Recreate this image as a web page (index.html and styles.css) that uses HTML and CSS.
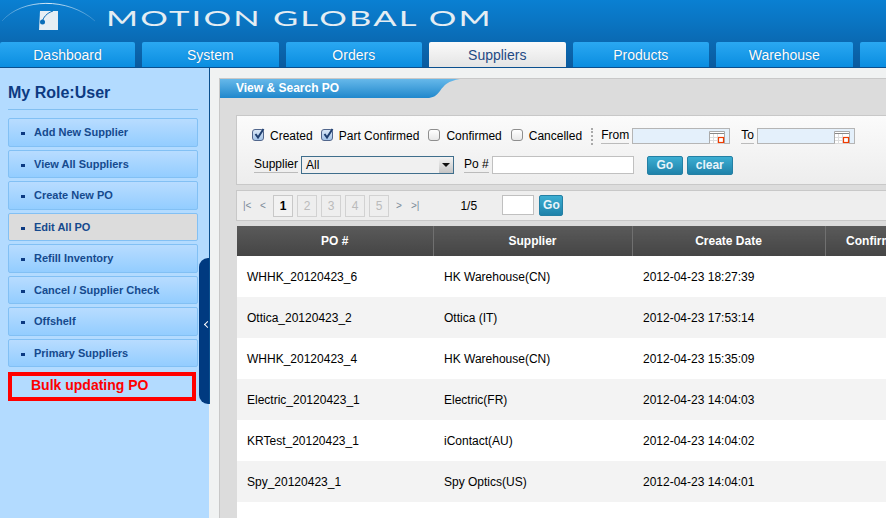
FILE: index.html
```html
<!DOCTYPE html>
<html>
<head>
    <meta charset="utf-8">
    <title>Motion Global OM</title>
    <link rel="stylesheet" href="styles.css">
</head>
<body>
    <div class="page">
        <div class="header">
            <div class="brand">
                <svg class="logo" width="100" height="38" viewBox="0 0 100 38">
                    <defs>
                        <linearGradient id="arcfill" x1="0" y1="0" x2="1" y2="0">
                            <stop offset="0" stop-color="#ffffff" stop-opacity="0.15"/>
                            <stop offset="0.5" stop-color="#ffffff" stop-opacity="0.85"/>
                            <stop offset="1" stop-color="#ffffff" stop-opacity="0.15"/>
                        </linearGradient>
                    </defs>
                    <path d="M2 21 C22 -2 68 -3 95 21" fill="none" stroke="url(#arcfill)" stroke-width="1"/>
                    <path d="M40 11 L58 11 L58 30 L39 30 Z" fill="#e6eef4"/>
                    <path d="M42 23 C43 17 47 13 53 11" fill="none" stroke="#0a6db8" stroke-width="1"/>
                    <circle cx="42.500" cy="22" r="2.500" fill="#0a6db8"/>
                </svg>
                <span class="brand-name">MOTION GLOBAL OM</span>
            </div>
            <ul class="tabs">
                <li>Dashboard</li>
                <li>System</li>
                <li>Orders</li>
                <li class="on">Suppliers</li>
                <li>Products</li>
                <li>Warehouse</li>
                <li></li>
            </ul>
        </div>
        <div class="body">
            <div class="side">
                <h2 class="role">My Role:User</h2>
                <ul class="menu">
                    <li class="t1">Add New Supplier</li>
                    <li class="t2">View All Suppliers</li>
                    <li class="t1">Create New PO</li>
                    <li class="t3 on">Edit All PO</li>
                    <li class="t1">Refill Inventory</li>
                    <li class="t2">Cancel / Supplier Check</li>
                    <li class="t1">Offshelf</li>
                    <li class="t2">Primary Suppliers</li>
                </ul>
                <div class="bulk">Bulk updating PO</div>
                <div class="handle"><span class="chevron"></span></div>
            </div>
            <div class="main">
                <div class="panel">
                    <div class="panel-head">
                        <svg class="panel-tab" width="240" height="20" viewBox="0 0 240 20" preserveAspectRatio="none">
                            <defs>
                                <linearGradient id="tabfill" x1="0" y1="0" x2="0" y2="1">
                                    <stop offset="0" stop-color="#66b8ea"/>
                                    <stop offset="1" stop-color="#2088cc"/>
                                </linearGradient>
                            </defs>
                            <path d="M0 0 H240 C228 2 224 6 220 12 C216 17 213 19 207 19 H0 Z" fill="url(#tabfill)"/>
                        </svg>
                        <span class="panel-title">View &amp; Search PO</span>
                    </div>
                    <div class="filter">
                        <div class="filter-row">
                            <span class="check on"><svg width="12" height="12" viewBox="0 0 12 12"><path d="M2.500 6 L5 9.500 L10.500 1" fill="none" stroke="#1f3f70" stroke-width="2"/></svg></span>
                            <span class="opt opt1">Created</span>
                            <span class="check on"><svg width="12" height="12" viewBox="0 0 12 12"><path d="M2.500 6 L5 9.500 L10.500 1" fill="none" stroke="#1f3f70" stroke-width="2"/></svg></span>
                            <span class="opt opt2">Part Confirmed</span>
                            <span class="check"></span>
                            <span class="opt opt3">Confirmed</span>
                            <span class="check"></span>
                            <span class="opt opt4">Cancelled</span>
                            <span class="dots"></span>
                            <span class="lbl">From</span>
                            <span class="date">
                                <svg class="cal" width="16" height="13" viewBox="0 0 16 13">
                                    <path d="M0.500 12.500 V0.500 H15.500 V12.500" fill="#fff" stroke="#aaa"/>
                                    <path d="M1 2.500 H15" stroke="#888"/>
                                    <path d="M1 6.500 H9 M1 9.500 H9 M4.500 3 V13 M8.500 3 V13" stroke="#ddd"/>
                                    <rect x="9.500" y="6.500" width="5" height="5" fill="#fff" stroke="#f03c00" stroke-width="1.200"/>
                                </svg>
                            </span>
                            <span class="lbl lbl-to">To</span>
                            <span class="date">
                                <svg class="cal" width="16" height="13" viewBox="0 0 16 13">
                                    <path d="M0.500 12.500 V0.500 H15.500 V12.500" fill="#fff" stroke="#aaa"/>
                                    <path d="M1 2.500 H15" stroke="#888"/>
                                    <path d="M1 6.500 H9 M1 9.500 H9 M4.500 3 V13 M8.500 3 V13" stroke="#ddd"/>
                                    <rect x="9.500" y="6.500" width="5" height="5" fill="#fff" stroke="#f03c00" stroke-width="1.200"/>
                                </svg>
                            </span>
                        </div>
                        <div class="filter-row row2">
                            <span class="lbl">Supplier</span>
                            <span class="select">All<span class="arrow"></span></span>
                            <span class="lbl lbl-po">Po #</span>
                            <span class="input"></span>
                            <span class="btn btn-go">Go</span>
                            <span class="btn btn-clear">clear</span>
                        </div>
                    </div>
                    <div class="pager">
                        <span class="nav nav1">|&lt;</span>
                        <span class="nav nav2">&lt;</span>
                        <span class="pg cur">1</span>
                        <span class="pg">2</span>
                        <span class="pg">3</span>
                        <span class="pg">4</span>
                        <span class="pg">5</span>
                        <span class="nav nav3">&gt;</span>
                        <span class="nav nav4">&gt;|</span>
                        <span class="count">1/5</span>
                        <span class="input page-input"></span>
                        <span class="btn btn-page">Go</span>
                    </div>
                    <table class="grid">
                        <colgroup>
                            <col class="c1"><col class="c2"><col class="c3"><col class="c4">
                        </colgroup>
                        <thead>
                            <tr><th>PO #</th><th>Supplier</th><th>Create Date</th><th>Confirm Date</th></tr>
                        </thead>
                        <tbody>
                            <tr><td>WHHK_20120423_6</td><td>HK Warehouse(CN)</td><td>2012-04-23 18:27:39</td><td></td></tr>
                            <tr><td>Ottica_20120423_2</td><td>Ottica (IT)</td><td>2012-04-23 17:53:14</td><td></td></tr>
                            <tr><td>WHHK_20120423_4</td><td>HK Warehouse(CN)</td><td>2012-04-23 15:35:09</td><td></td></tr>
                            <tr><td>Electric_20120423_1</td><td>Electric(FR)</td><td>2012-04-23 14:04:03</td><td></td></tr>
                            <tr><td>KRTest_20120423_1</td><td>iContact(AU)</td><td>2012-04-23 14:04:02</td><td></td></tr>
                            <tr><td>Spy_20120423_1</td><td>Spy Optics(US)</td><td>2012-04-23 14:04:01</td><td></td></tr>
                            <tr><td></td><td></td><td></td><td></td></tr>
                        </tbody>
                    </table>
                </div>
            </div>
        </div>
    </div>
</body>
</html>
```

FILE: styles.css
```css
html, body
{
    margin: 0;
    padding: 0;
    background: #f0f2f2;
    font-family: "Liberation Sans", Arial, sans-serif;
    font-size: 12px;
    color: #000;
}
ul
{
    list-style: none;
    margin: 0;
    padding: 0;
}
.page
{
    width: 886px;
    height: 518px;
    overflow: hidden;
}

/* header and tabs */
.header
{
    height: 68px;
    background: linear-gradient(#0a80d2 0, #0a76c4 20px, #0a5a9e 68px);
    overflow: hidden;
}
.brand
{
    height: 42px;
    display: flex;
    overflow: hidden;
}
.logo
{
    flex: none;
    width: 100px;
}
.brand-name
{
    flex: none;
    margin: 3px 0 0 6px;
    height: 30px;
    line-height: 30px;
    font-family: "Lato", "Liberation Sans", sans-serif;
    font-weight: 400;
    font-size: 22px;
    letter-spacing: 1.400px;
    white-space: nowrap;
    color: #e4edf3;
    transform: scaleX(1.570);
    transform-origin: 0 50%;
}
.tabs
{
    display: flex;
    gap: 7px;
    height: 25px;
    border-bottom: 1px solid #0a4f8e;
}
.tabs li
{
    flex: none;
    width: 136.500px;
    height: 25px;
    line-height: 26px;
    text-align: center;
    font-size: 14px;
    color: #fff;
    text-shadow: 0 0 1px #0b5fa5;
    background: linear-gradient(#2aa8f2, #0a8de0);
    border-radius: 2px 2px 0 0;
}
.tabs li:first-child
{
    width: 135px;
}
.tabs li.on
{
    color: #1f4a84;
    text-shadow: none;
    background: linear-gradient(#fafafa, #e4e4e4);
}

.body
{
    display: flex;
    height: 450px;
}

/* left column */
.side
{
    position: relative;
    flex: none;
    box-sizing: border-box;
    width: 210px;
    padding: 0 12px 0 8px;
    background: linear-gradient(to right, #b3dbff 209px, #f0f2f2 209px);
}
.side:after
{
    content: "";
    position: absolute;
    right: 0;
    top: 0;
    width: 1px;
    height: 336px;
    background: #0a4f8e;
}
.role
{
    margin: 0;
    padding: 15px 0 6px;
    height: 20px;
    line-height: 20px;
    font-size: 16px;
    font-weight: bold;
    color: #0c3a82;
    border-bottom: 1px solid #82bff0;
}
.menu
{
    padding-top: 8px;
}
.menu li
{
    box-sizing: border-box;
    margin-bottom: 3px;
    padding-left: 25px;
    font-size: 11px;
    font-weight: bold;
    color: #154a8e;
    background: linear-gradient(#b8dcff, #93cdff);
    border: 1px solid #82c0f4;
    border-radius: 2px;
    position: relative;
}
.menu .t1
{
    height: 29px;
    line-height: 26px;
}
.menu .t2
{
    height: 28px;
    line-height: 26px;
}
.menu .t3
{
    height: 28px;
    line-height: 26px;
}
.menu li:before
{
    content: "";
    position: absolute;
    left: 12px;
    top: 13px;
    width: 4px;
    height: 3px;
    background: #0c3a82;
}
.menu li.on
{
    background: #dcdcdc;
    margin-top: 3px;
}
.bulk
{
    box-sizing: border-box;
    width: 188px;
    height: 29px;
    margin-top: 5px;
    padding-left: 19px;
    line-height: 18px;
    font-size: 14px;
    font-weight: bold;
    color: #f00;
    border: 4px solid #f00;
}
.handle
{
    position: absolute;
    right: 1px;
    top: 190px;
    width: 10px;
    height: 146px;
    background: #003a80;
    border-radius: 9px 0 0 9px;
}
.chevron
{
    position: absolute;
    left: 6px;
    top: 64px;
    width: 4px;
    height: 4px;
    border-left: 1.500px solid #fff;
    border-bottom: 1.500px solid #fff;
    transform: rotate(45deg);
}

/* right column */
.main
{
    flex: 1;
    min-width: 0;
    padding: 10px 0 0 9px;
    background: #f0f2f2;
    overflow: hidden;
}
.panel
{
    width: 700px;
    height: 460px;
    background: #dcdcdc;
    border: 1px solid #c8c8c8;
    padding-left: 16px;
}
.panel-head
{
    position: relative;
    height: 36px;
    margin-left: -16px;
}
.panel-tab
{
    display: block;
    position: absolute;
    left: 0;
    top: 0;
}
.panel-title
{
    position: absolute;
    left: 16px;
    top: 1px;
    line-height: 17px;
    font-size: 12px;
    font-weight: bold;
    color: #fff;
}

.filter
{
    box-sizing: border-box;
    height: 70px;
    padding: 10px 0 0 15px;
    background: linear-gradient(#fbfbfb, #ededed);
    border: 1px solid #c8c8c8;
    border-right: 0;
    white-space: nowrap;
}
.filter-row
{
    display: flex;
    align-items: center;
    height: 20px;
}
.row2
{
    margin-top: 10px;
    margin-left: 2px;
    height: 18px;
}
.check
{
    flex: none;
    box-sizing: border-box;
    width: 12px;
    height: 12px;
    margin-top: -2px;
    border: 1px solid #8e8e8e;
    border-radius: 3px;
    background: linear-gradient(#fff, #e8e8e8);
}
.check.on
{
    border-color: #51668c;
    background: linear-gradient(#d8e6f6, #a4c4e8);
}
.check svg
{
    display: block;
    margin: -2px 0 0 0;
}
.opt
{
    margin-left: 6px;
}
.opt1
{
    margin-right: 8px;
}
.opt2
{
    margin-right: 9px;
}
.opt3
{
    margin-right: 9px;
}
.dots
{
    flex: none;
    height: 17px;
    margin: 0 8px 0 9px;
    border-left: 2px dotted #aaa;
}
.lbl
{
    flex: none;
    border-bottom: 1px solid #bbb;
    line-height: 15px;
}
.lbl-to
{
    margin-left: 11px;
}
.lbl-po
{
    margin-left: 10px;
}
.date
{
    flex: none;
    box-sizing: border-box;
    width: 98px;
    height: 16px;
    margin-left: 3px;
    background: #e4f0fb;
    border: 1px solid #b5b5b5;
    position: relative;
}
.cal
{
    position: absolute;
    right: 4px;
    top: 2px;
}
.select
{
    flex: none;
    box-sizing: border-box;
    position: relative;
    width: 153px;
    height: 18px;
    margin-left: 3px;
    padding-left: 4px;
    line-height: 16px;
    font-size: 12px;
    background: #f0f0f0;
    border: 1px solid #3f6e8c;
}
.arrow
{
    position: absolute;
    right: 0;
    top: 0;
    width: 14px;
    height: 16px;
    background: linear-gradient(#f4f4f4, #c4c4c4);
}
.arrow:after
{
    content: "";
    position: absolute;
    left: 3px;
    top: 6px;
    border: 4px solid transparent;
    border-top: 4px solid #111;
    border-bottom: 0;
}
.input
{
    flex: none;
    box-sizing: border-box;
    width: 142px;
    height: 18px;
    margin-left: 3px;
    background: #fff;
    border: 1px solid #c0c0c0;
}
.btn
{
    flex: none;
    box-sizing: border-box;
    height: 19px;
    line-height: 17px;
    text-align: center;
    font-size: 12px;
    font-weight: bold;
    color: #e8f4fa;
    background: linear-gradient(#3caed2, #1f82aa);
    border: 1px solid #2480a4;
    border-radius: 2px;
}
.btn-go
{
    width: 36px;
    margin-left: 13px;
}
.btn-clear
{
    width: 46px;
    margin-left: 4px;
}

.pager
{
    box-sizing: border-box;
    display: flex;
    align-items: center;
    height: 31px;
    margin-top: 5px;
    padding-left: 6px;
    background: #eee;
    border: 1px solid #c8c8c8;
    border-right: 0;
}
.nav
{
    flex: none;
    font-size: 10px;
    color: #7a8a99;
}
.nav1
{
    width: 17px;
}
.nav2
{
    width: 13px;
}
.nav3
{
    width: 15px;
    margin-left: 3px;
}
.pg
{
    flex: none;
    box-sizing: border-box;
    width: 20px;
    height: 22px;
    margin-right: 4px;
    line-height: 20px;
    text-align: center;
    color: #bbb;
    border: 1px solid #d2d2d2;
}
.pg.cur
{
    color: #000;
    font-weight: bold;
    border-color: #c8c8c8;
    background: #f2f2f2;
}
.count
{
    flex: none;
    margin-left: 41px;
    width: 42px;
}
.page-input
{
    width: 32px;
    height: 20px;
    margin-left: 0;
    margin-top: -2px;
}
.btn-page
{
    width: 24px;
    height: 21px;
    line-height: 19px;
    margin-left: 5px;
    margin-top: -1px;
}

.grid
{
    width: 705px;
    margin: 5px 0 0 1px;
    border-collapse: collapse;
    table-layout: fixed;
    font-size: 12px;
}
.c1
{
    width: 196px;
}
.c2
{
    width: 199px;
}
.c3
{
    width: 193px;
}
.grid th
{
    height: 30px;
    padding: 0;
    font-size: 12px;
    font-weight: bold;
    color: #fff;
    background: linear-gradient(#5a5a5a, #454545);
    border-left: 1px solid #707070;
    white-space: nowrap;
}
.grid th:first-child
{
    border-left: 0;
}
.grid td
{
    height: 41px;
    padding: 0 0 0 11px;
    background: #fff;
}
.grid td:first-child
{
    padding-left: 10px;
}
.grid tr:nth-child(even) td
{
    background: #f3f3f3;
}
```
